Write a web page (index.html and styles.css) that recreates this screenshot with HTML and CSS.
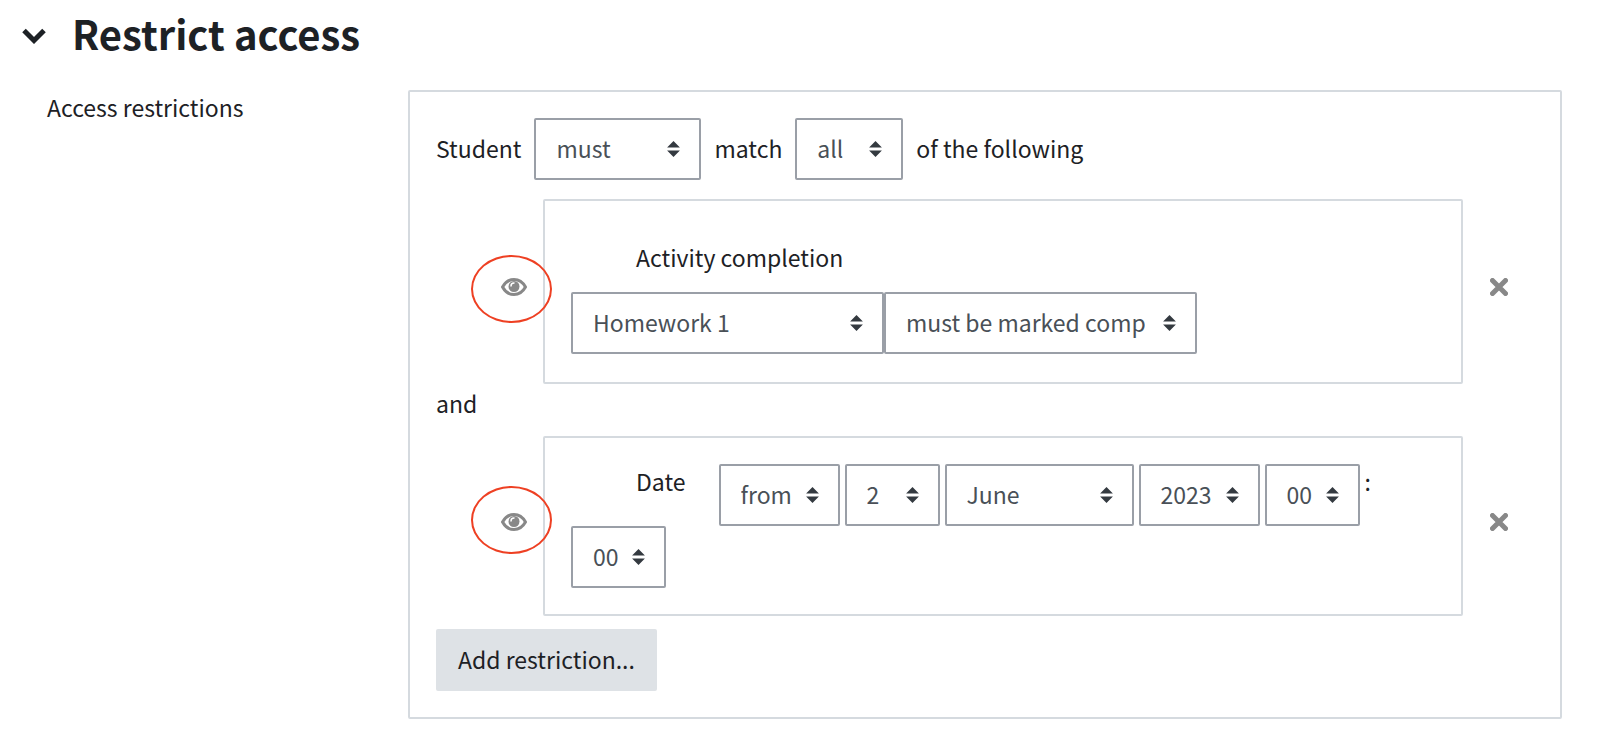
FILE: index.html
```html
<!DOCTYPE html>
<html lang="en">
<head>
    <meta charset="UTF-8">
    <meta name="viewport" content="width=device-width, initial-scale=1.0">
    <title>Restrict access</title>
    <link rel="stylesheet" href="styles.css">
</head>
<body>
    <div class="section-header">
        <button type="button" class="icon-button chevron" aria-label="Collapse" aria-expanded="true">
            <svg width="24" height="16" viewBox="0 0 24 16"><path d="M2 2.500l10 10 10-10" fill="none" stroke="#1d2125" stroke-width="5"/></svg>
        </button>
        <h2>Restrict access</h2>
    </div>

    <form class="form-row">
        <div class="form-label">Access restrictions</div>

        <div class="restrictions">
            <div class="match-line">
                <label for="must">Student</label>
                <select id="must" class="select-must">
                    <option>must</option>
                    <option>must not</option>
                </select>
                <label for="all">match</label>
                <select id="all" class="select-all">
                    <option>all</option>
                    <option>any</option>
                </select>
                <span>of the following</span>
            </div>

            <div class="item">
                <button type="button" class="icon-button eye" aria-label="Show or hide the activity condition">
                    <svg width="26" height="18" viewBox="0 0 26 18">
                        <path d="M1.500 9C4 4.500 8 1.500 13 1.500S22 4.500 24.500 9C22 13.500 18 16.500 13 16.500S4 13.500 1.500 9z" fill="none" stroke="#888" stroke-width="3" stroke-linejoin="round"/>
                        <circle cx="13" cy="8.500" r="5.500" fill="#888"/>
                        <path d="M10 8a3 3 0 0 1 3-3" fill="none" stroke="#fff" stroke-width="1.500" stroke-linecap="round"/>
                    </svg>
                    <span class="ring"></span>
                </button>
                <div class="condition">
                    <label class="condition-title" for="activity">Activity completion</label>
                    <div class="joined">
                        <select id="activity" class="select-wide">
                            <option>Homework 1</option>
                        </select>
                        <select class="select-wide" aria-label="Required completion status">
                            <option>must be marked complete</option>
                        </select>
                    </div>
                </div>
                <button type="button" class="icon-button delete" aria-label="Delete">
                    <svg width="18" height="18" viewBox="0 0 18 18"><path d="M2.500 2.500l13 13M15.500 2.500l-13 13" stroke="#888" stroke-width="5" stroke-linecap="round"/></svg>
                </button>
            </div>

            <div class="connector">and</div>

            <div class="item">
                <button type="button" class="icon-button eye" aria-label="Show or hide the date condition">
                    <svg width="26" height="18" viewBox="0 0 26 18">
                        <path d="M1.500 9C4 4.500 8 1.500 13 1.500S22 4.500 24.500 9C22 13.500 18 16.500 13 16.500S4 13.500 1.500 9z" fill="none" stroke="#888" stroke-width="3" stroke-linejoin="round"/>
                        <circle cx="13" cy="8.500" r="5.500" fill="#888"/>
                        <path d="M10 8a3 3 0 0 1 3-3" fill="none" stroke="#fff" stroke-width="1.500" stroke-linecap="round"/>
                    </svg>
                    <span class="ring ring-high"></span>
                </button>
                <div class="condition date">
                    <label class="date-title" for="direction">Date</label>
                    <select id="direction" class="select-medium">
                        <option>from</option>
                        <option>until</option>
                    </select>
                    <select class="select-small" aria-label="Day">
                        <option>2</option>
                    </select>
                    <select class="select-month" aria-label="Month">
                        <option>June</option>
                    </select>
                    <select class="select-medium" aria-label="Year">
                        <option>2023</option>
                    </select>
                    <select class="select-small" aria-label="Hour">
                        <option>00</option>
                    </select>
                    <span>:</span>
                    <select class="select-small" aria-label="Minute">
                        <option>00</option>
                    </select>
                </div>
                <button type="button" class="icon-button delete" aria-label="Delete">
                    <svg width="18" height="18" viewBox="0 0 18 18"><path d="M2.500 2.500l13 13M15.500 2.500l-13 13" stroke="#888" stroke-width="5" stroke-linecap="round"/></svg>
                </button>
            </div>

            <button type="button" class="add">Add restriction...</button>
        </div>
    </form>
</body>
</html>
```

FILE: styles.css
```css
* {
    box-sizing: border-box;
}
body {
    margin: 0;
    padding: 4px 38px 24px 22px;
    background: #fff;
    color: #1d2125;
    font-family: "Noto Sans CJK SC", "Open Sans", sans-serif;
    font-size: 23px;
    line-height: 34px;
}
.section-header {
    display: flex;
    align-items: center;
    gap: 26px;
}
h2 {
    margin: 0;
    font-size: 40px;
    font-weight: 600;
    line-height: 58px;
}
.icon-button {
    display: flex;
    padding: 0;
    border: none;
    background: none;
    cursor: pointer;
}
.chevron {
    margin-top: 6px;
}
.form-row {
    display: flex;
    margin-top: 28px;
}
.form-label {
    flex: 0 0 386px;
    padding-left: 25px;
}
.restrictions {
    flex: 1;
    min-width: 0;
    padding: 26px;
    border: 2px solid #d5dadf;
    border-radius: 2px;
}
select {
    height: 62px;
    padding: 0 44px 2px 20px;
    border: 2px solid #9a9fa7;
    border-radius: 2px;
    appearance: none;
    background: #fff url("data:image/svg+xml,%3Csvg xmlns='http://www.w3.org/2000/svg' viewBox='0 0 4 5'%3E%3Cpath fill='%23343a40' d='M2 0L0 2h4zm0 5L0 3h4z'/%3E%3C/svg%3E") no-repeat right 19px center / 13px 16px;
    color: #495057;
    font: inherit;
}
.select-must {
    width: 167px;
}
.select-all {
    width: 108px;
}
.select-wide {
    width: 313px;
    padding-right: 50px;
}
.select-medium {
    width: 121px;
}
.select-small {
    width: 95px;
}
.select-month {
    width: 189px;
}
.match-line {
    display: flex;
    align-items: center;
    gap: 13px;
    margin-bottom: 19px;
}
.match-line label,
.match-line span {
    padding-bottom: 2px;
}
.item {
    display: flex;
    align-items: center;
}
.eye {
    position: relative;
    margin: 0 16px 9px 65px;
}
/* red marker around the visibility icon */
.ring {
    position: absolute;
    top: -23px;
    left: -30px;
    width: 81px;
    height: 68px;
    border: 2px solid #ee4023;
    border-radius: 50%;
}
.ring-high {
    top: -27px;
}
.condition {
    flex: 1;
    padding: 26px 26px 28px;
    border: 2px solid #d5dadf;
    border-radius: 2px;
}
.condition-title {
    display: block;
    padding-left: 65px;
    line-height: 60px;
    margin-bottom: 5px;
}
.joined {
    display: flex;
}
.date {
    display: flex;
    flex-wrap: wrap;
    align-items: flex-start;
    column-gap: 5px;
    padding-bottom: 26px;
}
.date-title {
    padding: 0 28px 0 65px;
}
.delete {
    margin: 0 26px 9px 27px;
}
.connector {
    margin: 2px 0 16px;
}
.add {
    display: block;
    height: 62px;
    margin-top: 13px;
    padding: 0 22px 2px;
    border: none;
    border-radius: 2px;
    background: #dee2e6;
    color: #1d2125;
    font: inherit;
}
```
